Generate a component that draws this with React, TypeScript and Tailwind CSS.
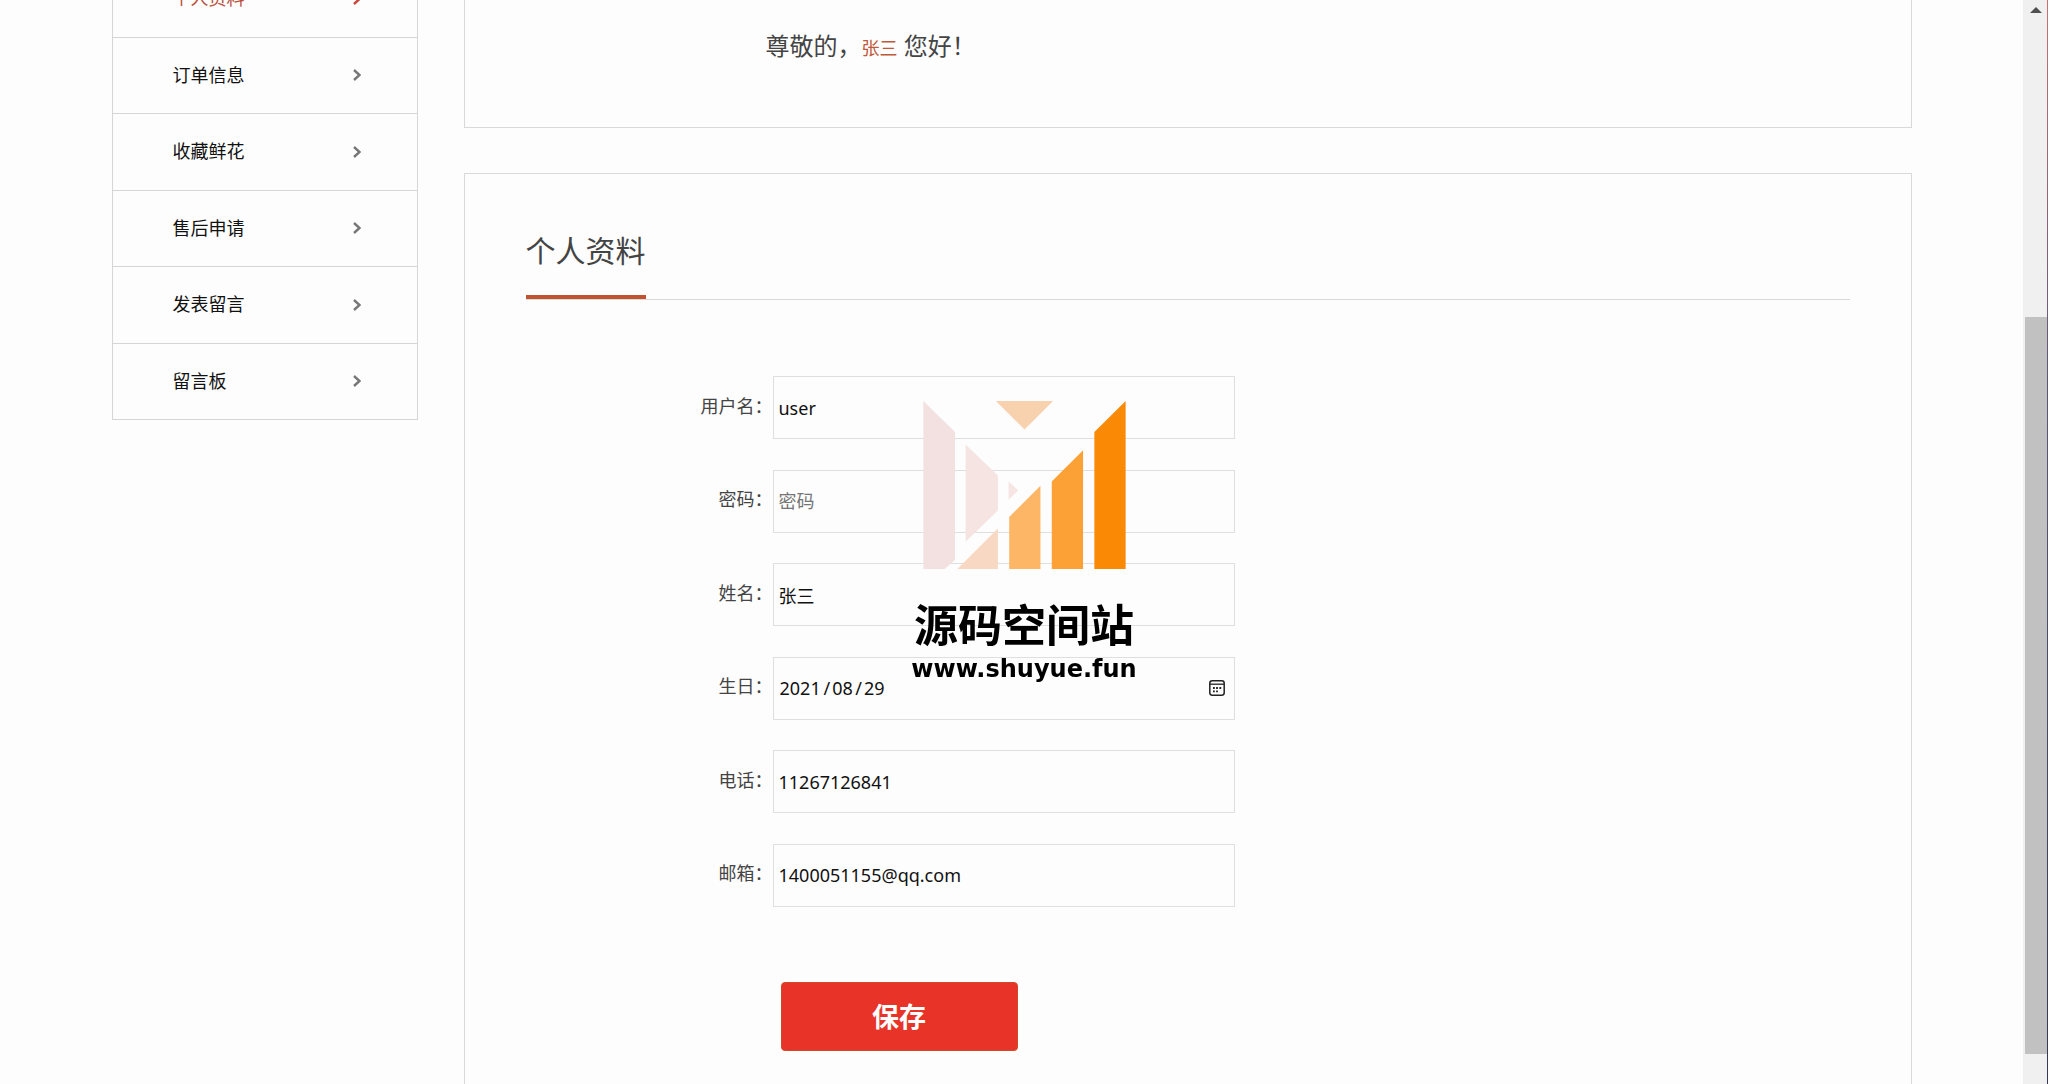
import React from "react";

const menu = ["个人资料", "订单信息", "收藏鲜花", "售后申请", "发表留言", "留言板"];

const boxClass =
  "h-[63px] w-[462px] border border-[#dfdfdf] bg-transparent px-[5px] text-[18px] text-[#111] outline-none placeholder:text-[#757575]";

function Row({ id, label, children }: { id: string; label: string; children: React.ReactNode }) {
  return (
    <div className="flex items-center">
      <label htmlFor={id} className="w-[247px] pb-[3px] text-right text-[18px] text-[#444]">
        {label}：
      </label>
      {children}
    </div>
  );
}

function Sidebar() {
  return (
    <nav className="-mt-[39px] w-[306px] shrink-0">
      <ul className="grid h-[459px] auto-rows-fr border-x border-[#d6d6d6]">
        {menu.map((name, i) => (
          <li key={name} className="border-b border-[#d6d6d6]">
            <a
              href="#"
              className={
                i === 0
                  ? "flex h-full items-center justify-between pr-[56px] pl-[60px] text-[18px] text-[#b8503c]"
                  : "flex h-full items-center justify-between pr-[56px] pl-[60px] text-[18px] text-[#111]"
              }
            >
              {name}
              <svg
                viewBox="0 0 8 12"
                className={i === 0 ? "h-3 w-2 text-[#c8453a]" : "h-3 w-2 text-[#777]"}
                fill="none"
                stroke="currentColor"
                strokeWidth="2.4"
              >
                <path d="M1 1l5.5 5L1 11" />
              </svg>
            </a>
          </li>
        ))}
      </ul>
    </nav>
  );
}

function ProfileForm() {
  return (
    <form className="mt-[76px]">
      <div className="flex h-[531px] flex-col justify-between">
        <Row id="username" label="用户名">
          <input id="username" type="text" defaultValue="user" className={boxClass} />
        </Row>
        <Row id="password" label="密码">
          <input id="password" type="password" placeholder="密码" className={boxClass} />
        </Row>
        <Row id="name" label="姓名">
          <input id="name" type="text" defaultValue="张三" className={boxClass} />
        </Row>
        <Row id="year" label="生日">
          <div className="flex h-[63px] w-[462px] items-center border border-[#dfdfdf] pr-[9px] pl-[6px] text-[18px] text-[#111]">
            <input id="year" aria-label="年" defaultValue="2021" className="w-[44px] outline-none" />
            <span>/</span>
            <input aria-label="月" defaultValue="08" className="ml-[2px] w-[23px] outline-none" />
            <span>/</span>
            <input aria-label="日" defaultValue="29" className="ml-[2px] w-[23px] outline-none" />
            <button type="button" aria-label="选择日期" className="ml-auto">
              <svg viewBox="0 0 16 16" className="size-4" fill="none" stroke="#222">
                <rect x="0.8" y="0.8" width="14.4" height="14.4" rx="2.4" strokeWidth="1.5" />
                <path d="M1 4.2h14" strokeWidth="1.3" />
                <path
                  d="M4 8h1.8M7.1 8h1.8M10.4 8h1.8M4 11.3h1.8M7.1 11.3h1.8"
                  strokeWidth="1.8"
                />
              </svg>
            </button>
          </div>
        </Row>
        <Row id="phone" label="电话">
          <input id="phone" type="text" defaultValue="11267126841" className={boxClass} />
        </Row>
        <Row id="email" label="邮箱">
          <input id="email" type="text" defaultValue="1400051155@qq.com" className={boxClass} />
        </Row>
      </div>
      <button
        type="button"
        className="mt-[75px] ml-[255px] h-[69px] w-[237px] rounded border border-[#cf4a2b] bg-[#e83428] pt-[2px] text-[27px] font-bold text-white"
      >
        保存
      </button>
    </form>
  );
}

function Watermark() {
  return (
    <div className="pointer-events-none fixed inset-0 flex flex-col items-center justify-center text-black">
      <svg viewBox="68 62 608 505" className="h-[168px] w-[203px]">
        <path d="M68 62l95 93v385l-31 27H68z" fill="#f3e1e1" />
        <path d="M195 193l97 93v105l-97 94z" fill="#f5e4e2" />
        <path d="M324 303l29 28-29 28z" fill="#f6e5e2" />
        <path d="M286 62h172l-86 86z" fill="#f8d1ae" />
        <path d="M170 567l122-122v122z" fill="#f8d8c2" />
        <path d="M326 411l94-94v250h-94z" fill="#fcb666" />
        <path d="M454 304l94-94v357h-94z" fill="#fba135" />
        <path d="M582 155l94-93v505h-94z" fill="#fa8a05" />
      </svg>
      <p className="mt-[34px] text-[44px] leading-[44px] font-bold">源码空间站</p>
      <p className="mt-[8px] font-['DejaVu_Sans',sans-serif] text-[24px] leading-[28px] font-bold">
        www.shuyue.fun
      </p>
    </div>
  );
}

function Scrollbar() {
  return (
    <div className="flex h-screen w-[25px] shrink-0 bg-[#f0f0f0] pl-[2px]">
      <div className="flex w-[22px] flex-col">
        <div className="flex h-[20px] items-center justify-center">
          <svg viewBox="0 0 12 6" className="h-[6px] w-[12px]">
            <path d="M0 6l6-6 6 6z" fill="#505050" />
          </svg>
        </div>
        <div className="flex-[297]" />
        <div className="flex-[737] bg-[#c1c1c1]" />
        <div className="flex-[30]" />
      </div>
      <div className="w-px bg-linear-to-b from-[#c8716f] via-[#5b5878] via-35% to-[#333a52]" />
    </div>
  );
}

export default function App() {
  return (
    <div className="flex h-screen overflow-hidden bg-[#fdfdfd] font-['Noto_Sans','Noto_Sans_CJK_SC',sans-serif]">
      <div className="h-full flex-1">
        <div className="mx-auto flex h-full max-w-[1800px] items-start gap-[46px]">
          <Sidebar />
          <main className="flex h-full flex-1 flex-col">
            <section className="h-[128px] shrink-0 border-x border-b border-[#d9d9d9] pt-[28px] pl-[301px] text-[24px] leading-[36px] text-[#444]">
              尊敬的，<span className="text-[18px] text-[#c0583a]">张三</span> 您好！
            </section>
            <section className="mt-[45px] flex-1 border-x border-t border-[#d9d9d9] px-[61px] pt-[54px]">
              <header className="flex border-b border-[#d9d9d9]">
                <h2 className="border-b-4 border-[#c1512f] pb-[22px] text-[30px] leading-[45px] text-[#444]">
                  个人资料
                </h2>
              </header>
              <ProfileForm />
            </section>
          </main>
        </div>
      </div>
      <Scrollbar />
      <Watermark />
    </div>
  );
}
